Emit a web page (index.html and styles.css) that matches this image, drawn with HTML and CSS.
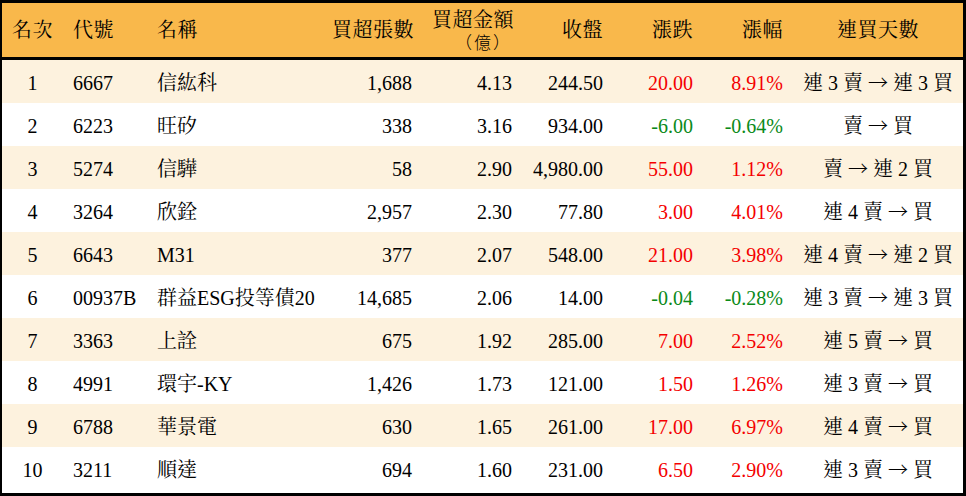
FILE: index.html
```html
<!DOCTYPE html>
<html lang="zh-Hant">
<head>
<meta charset="utf-8">
<title>買超排行</title>
<link rel="stylesheet" href="styles.css">
</head>
<body>
<div class="frame">
<table class="rank">
<colgroup>
<col class="c-rank"><col class="c-code"><col class="c-name"><col class="c-vol"><col class="c-amt"><col class="c-close"><col class="c-chg"><col class="c-pct"><col class="c-days">
</colgroup>
<thead>
<tr>
<th class="ctr">名次</th>
<th class="lft">代號</th>
<th class="lft">名稱</th>
<th class="rgt">買超張數</th>
<th class="rgt two"><span class="line">買超金額</span><span class="line unit">（億）</span></th>
<th class="rgt">收盤</th>
<th class="rgt">漲跌</th>
<th class="rgt">漲幅</th>
<th class="ctr">連買天數</th>
</tr>
</thead>
<tbody>
<tr class="alt"><td class="ctr">1</td><td class="lft">6667</td><td class="lft">信紘科</td><td class="rgt">1,688</td><td class="rgt">4.13</td><td class="rgt">244.50</td><td class="rgt up">20.00</td><td class="rgt up">8.91%</td><td class="ctr">連 3 賣 <span class="arr">→</span> 連 3 買</td></tr>
<tr><td class="ctr">2</td><td class="lft">6223</td><td class="lft">旺矽</td><td class="rgt">338</td><td class="rgt">3.16</td><td class="rgt">934.00</td><td class="rgt down">-6.00</td><td class="rgt down">-0.64%</td><td class="ctr">賣 <span class="arr">→</span> 買</td></tr>
<tr class="alt"><td class="ctr">3</td><td class="lft">5274</td><td class="lft">信驊</td><td class="rgt">58</td><td class="rgt">2.90</td><td class="rgt">4,980.00</td><td class="rgt up">55.00</td><td class="rgt up">1.12%</td><td class="ctr">賣 <span class="arr">→</span> 連 2 買</td></tr>
<tr><td class="ctr">4</td><td class="lft">3264</td><td class="lft">欣銓</td><td class="rgt">2,957</td><td class="rgt">2.30</td><td class="rgt">77.80</td><td class="rgt up">3.00</td><td class="rgt up">4.01%</td><td class="ctr">連 4 賣 <span class="arr">→</span> 買</td></tr>
<tr class="alt"><td class="ctr">5</td><td class="lft">6643</td><td class="lft">M31</td><td class="rgt">377</td><td class="rgt">2.07</td><td class="rgt">548.00</td><td class="rgt up">21.00</td><td class="rgt up">3.98%</td><td class="ctr">連 4 賣 <span class="arr">→</span> 連 2 買</td></tr>
<tr><td class="ctr">6</td><td class="lft">00937B</td><td class="lft">群益ESG投等債20</td><td class="rgt">14,685</td><td class="rgt">2.06</td><td class="rgt">14.00</td><td class="rgt down">-0.04</td><td class="rgt down">-0.28%</td><td class="ctr">連 3 賣 <span class="arr">→</span> 連 3 買</td></tr>
<tr class="alt"><td class="ctr">7</td><td class="lft">3363</td><td class="lft">上詮</td><td class="rgt">675</td><td class="rgt">1.92</td><td class="rgt">285.00</td><td class="rgt up">7.00</td><td class="rgt up">2.52%</td><td class="ctr">連 5 賣 <span class="arr">→</span> 買</td></tr>
<tr><td class="ctr">8</td><td class="lft">4991</td><td class="lft">環宇-KY</td><td class="rgt">1,426</td><td class="rgt">1.73</td><td class="rgt">121.00</td><td class="rgt up">1.50</td><td class="rgt up">1.26%</td><td class="ctr">連 3 賣 <span class="arr">→</span> 買</td></tr>
<tr class="alt"><td class="ctr">9</td><td class="lft">6788</td><td class="lft">華景電</td><td class="rgt">630</td><td class="rgt">1.65</td><td class="rgt">261.00</td><td class="rgt up">17.00</td><td class="rgt up">6.97%</td><td class="ctr">連 4 賣 <span class="arr">→</span> 買</td></tr>
<tr><td class="ctr">10</td><td class="lft">3211</td><td class="lft">順達</td><td class="rgt">694</td><td class="rgt">1.60</td><td class="rgt">231.00</td><td class="rgt up">6.50</td><td class="rgt up">2.90%</td><td class="ctr">連 3 賣 <span class="arr">→</span> 買</td></tr>
</tbody>
</table>
</div>
</body>
</html>
```
FILE: styles.css
```css
html, body {
  margin: 0;
  padding: 0;
  background: #ffffff;
}
.frame {
  width: 966px;
  height: 496px;
  box-sizing: border-box;
  border-top: 3px solid #000;
  border-bottom: 3px solid #000;
  border-left: 2px solid #000;
  border-right: 3px solid #000;
  overflow: hidden;
}
.rank {
  width: 961px;
  table-layout: fixed;
  border-collapse: separate;
  border-spacing: 0;
  font-family: "Liberation Serif", "Noto Serif CJK TC", "Noto Sans CJK TC", serif;
  font-size: 20px;
  color: #000;
}
.c-rank { width: 61px; }
.c-code { width: 84px; }
.c-name { width: 175px; }
.c-vol { width: 100px; }
.c-amt { width: 100px; }
.c-close { width: 91px; }
.c-chg { width: 90px; }
.c-pct { width: 90px; }
.c-days { width: 170px; }
.rank th {
  background: #f9b84b;
  font-weight: normal;
  height: 57px;
  padding: 0 10px;
  box-sizing: border-box;
  border-bottom: 3px solid #000;
  line-height: 20px;
  white-space: nowrap;
  letter-spacing: 0.5px;
}
.rank th.two {
  padding-top: 2px;
}
.line {
  display: block;
  height: 22px;
  line-height: 22px;
}
.unit {
  letter-spacing: 2px;
  font-family: "Noto Sans CJK TC", sans-serif;
  font-weight: 300;
  font-size: 17px;
}
.rank td {
  height: 43px;
  padding: 0 10px;
  box-sizing: border-box;
  line-height: 22px;
  padding-top: 2px;
  white-space: nowrap;
}
.arr {
  font-family: "Noto Sans CJK TC", sans-serif;
  font-weight: 300;
  display: inline-block;
  width: 20px;
  text-align: center;
}
.rank tr.alt td { background: #fdf2de; }
.ctr { text-align: center; }
.lft { text-align: left; }
.rgt { text-align: right; }
.rank th.ctr, .rank td.ctr { padding-left: 0; padding-right: 0; }
.up { color: #f40000; }
.down { color: #0a8a18; }
```
